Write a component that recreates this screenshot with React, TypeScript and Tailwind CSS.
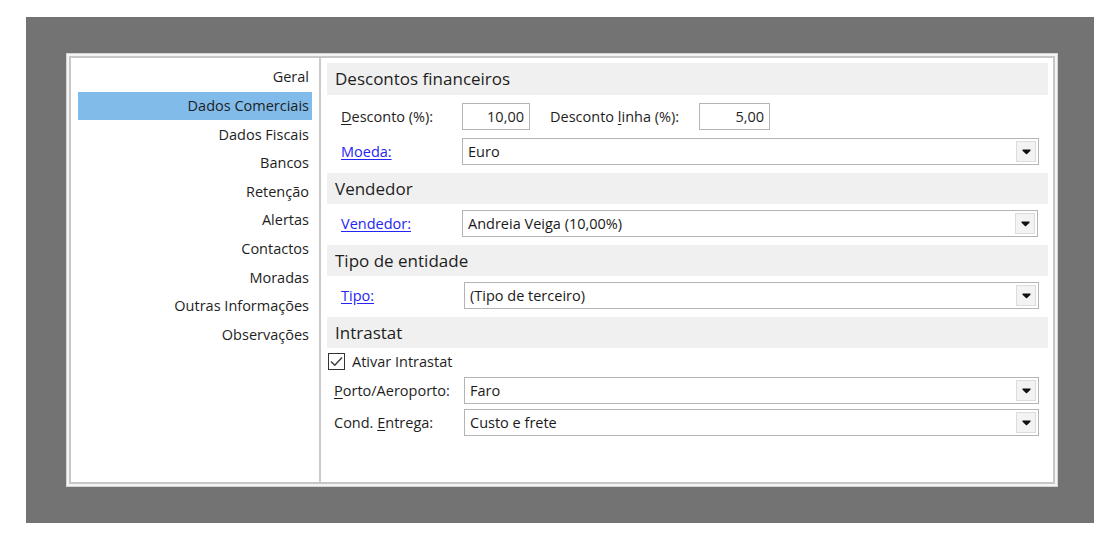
import React from "react";

const font = { fontFamily: '"Open Sans", "Noto Sans", "Liberation Sans", sans-serif' };

const navItems = [
  "Geral",
  "Dados Comerciais",
  "Dados Fiscais",
  "Bancos",
  "Retenção",
  "Alertas",
  "Contactos",
  "Moradas",
  "Outras Informações",
  "Observações",
];

function Arrow() {
  return (
    <div className="absolute right-[2px] top-[2px] flex h-[21px] w-[20px] items-center justify-center border border-[#dcdcdc] bg-[#f3f3f3]">
      <svg width="9" height="6" viewBox="0 0 9 6">
        <path d="M0.5 0.5 H8.5 V1.8 L4.5 5.5 L0.5 1.8 Z" fill="#111" />
      </svg>
    </div>
  );
}

function Combo({ value }: { value: string }) {
  return (
    <div className="relative flex h-[27px] flex-1 items-center border border-[#b4b4b4] bg-white pl-[5px] text-[14.5px] text-[#1a1a1a]">
      {value}
      <Arrow />
    </div>
  );
}

function Header({ children, h = "h-[31px]" }: { children: React.ReactNode; h?: string }) {
  return (
    <div className={`flex items-center bg-[#f0f0f0] pl-[8px] text-[17px] text-[#1e1e1e] ${h}`}>
      {children}
    </div>
  );
}

function LinkLabel({ children }: { children: React.ReactNode }) {
  return <span className="text-[14.5px] text-[#2424f5] underline underline-offset-2">{children}</span>;
}

export default function App() {
  return (
    <div className="h-[537px] w-[1111px] bg-white pl-[26px] pt-[17px]" style={font}>
      <div className="h-[506px] w-[1068px] bg-[#737373] pl-[40px] pt-[36px]">
        <div className="h-[434px] w-[992px] border border-[#d4d4d4] bg-[#f4f4f4] p-[2px]">
          <div className="flex h-full w-full border-2 border-[#c6c6c6] bg-white">
            {/* Sidebar */}
            <div className="w-[250px] border-r-2 border-[#cacaca] px-[7px] pt-[5px]">
              {navItems.map((item) => (
                <div
                  key={item}
                  className={`flex h-[28.6px] items-center justify-end pr-[3px] text-[14.5px] text-[#1e1e1e] ${
                    item === "Dados Comerciais" ? "bg-[#80bbea]" : ""
                  }`}
                >
                  {item}
                </div>
              ))}
            </div>

            {/* Content */}
            <div className="flex flex-1 flex-col pl-[6px] pr-[5px] pt-[5px] text-[14.5px] text-[#1e1e1e]">
              <Header h="h-[32px]">Descontos financeiros</Header>
              <div className="mt-[8px] flex h-[27px] items-center pl-[14px]">
                <span className="w-[121px]">
                  <span className="underline underline-offset-2">D</span>esconto (%):
                </span>
                <div className="flex h-[27px] w-[68px] items-center justify-end border border-[#b4b4b4] pr-[5px]">
                  10,00
                </div>
                <span className="ml-[20px] w-[149px]">
                  Desconto <span className="underline underline-offset-2">l</span>inha (%):
                </span>
                <div className="flex h-[27px] w-[71px] items-center justify-end border border-[#b4b4b4] pr-[5px]">
                  5,00
                </div>
              </div>
              <div className="mt-[8px] flex items-center pl-[14px] pr-[9px]">
                <span className="w-[121px]">
                  <LinkLabel>Moeda:</LinkLabel>
                </span>
                <Combo value="Euro" />
              </div>

              <div className="mt-[8px]">
                <Header>Vendedor</Header>
              </div>
              <div className="mt-[6px] flex items-center pl-[14px] pr-[10px]">
                <span className="w-[121px]">
                  <LinkLabel>Vendedor:</LinkLabel>
                </span>
                <Combo value="Andreia Veiga (10,00%)" />
              </div>

              <div className="mt-[8px]">
                <Header>Tipo de entidade</Header>
              </div>
              <div className="mt-[6px] flex items-center pl-[14px] pr-[9px]">
                <span className="w-[123px]">
                  <LinkLabel>Tipo:</LinkLabel>
                </span>
                <Combo value="(Tipo de terceiro)" />
              </div>

              <div className="mt-[8px]">
                <Header>Intrastat</Header>
              </div>
              <div className="mt-[5px] flex h-[17px] items-center pl-[1px]">
                <div className="flex h-[17px] w-[17px] items-center justify-center border border-[#333] bg-white">
                  <svg width="13" height="11" viewBox="0 0 13 11">
                    <path d="M1 5.5 L4.8 9.3 L12 1.5" stroke="#3a3a3a" strokeWidth="1.4" fill="none" />
                  </svg>
                </div>
                <span className="ml-[7px]">Ativar Intrastat</span>
              </div>
              <div className="mt-[7px] flex items-center pl-[7px] pr-[9px]">
                <span className="w-[130px]">
                  <span className="underline underline-offset-2">P</span>orto/Aeroporto:
                </span>
                <Combo value="Faro" />
              </div>
              <div className="mt-[5px] flex items-center pl-[7px] pr-[9px]">
                <span className="w-[130px]">
                  Cond. <span className="underline underline-offset-2">E</span>ntrega:
                </span>
                <Combo value="Custo e frete" />
              </div>
            </div>
          </div>
        </div>
      </div>
    </div>
  );
}
